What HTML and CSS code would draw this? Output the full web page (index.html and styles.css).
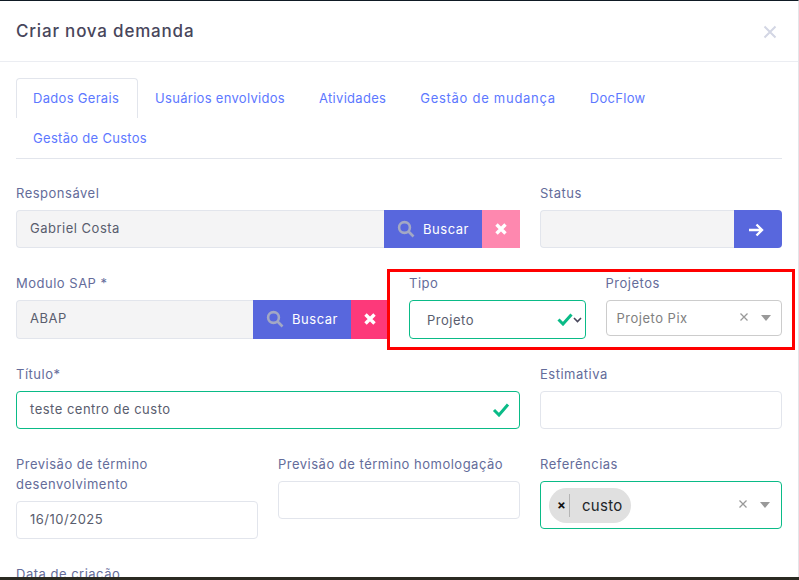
FILE: index.html
```html
<!DOCTYPE html>
<html lang="pt-BR">
<head>
<meta charset="utf-8">
<title>Criar nova demanda</title>
<link rel="stylesheet" href="styles.css">
</head>
<body>
<div class="modal">
  <header class="modal-header">
    <h1 class="modal-title">Criar nova demanda</h1>
    <svg class="close" width="14" height="14" viewBox="0 0 14 14"><path d="M1.500 1.500l11 11M12.500 1.500l-11 11"/></svg>
  </header>
  <div class="modal-body">
    <ul class="tabs">
      <li class="tab active">Dados Gerais</li>
      <li class="tab">Usuários envolvidos</li>
      <li class="tab">Atividades</li>
      <li class="tab tab-wide">Gestão de mudança</li>
      <li class="tab">DocFlow</li>
      <li class="tab">Gestão de Custos</li>
    </ul>
    <div class="grid">
      <div class="field s8">
        <label class="label">Responsável</label>
        <div class="group">
          <div class="control disabled joined">Gabriel Costa</div>
          <div class="btn search"><svg class="mag" width="18" height="18" viewBox="0 0 18 18"><circle cx="7.500" cy="7.500" r="5.400"/><path d="M11.500 11.500l5 5"/></svg>Buscar</div>
          <div class="btn clear faded"><svg class="x" width="12" height="12" viewBox="0 0 12 12"><path d="M1.500 1.500l9 9M10.500 1.500l-9 9"/></svg></div>
        </div>
      </div>
      <div class="field s4">
        <label class="label">Status</label>
        <div class="group">
          <div class="control disabled joined"></div>
          <div class="btn go"><svg class="arrow" width="16" height="14" viewBox="0 0 16 14"><path d="M1 7h13M8.500 1.500L14 7l-5.500 5.500"/></svg></div>
        </div>
      </div>
      <div class="field s6">
        <label class="label">Modulo SAP *</label>
        <div class="group">
          <div class="control disabled joined">ABAP</div>
          <div class="btn search"><svg class="mag" width="18" height="18" viewBox="0 0 18 18"><circle cx="7.500" cy="7.500" r="5.400"/><path d="M11.500 11.500l5 5"/></svg>Buscar</div>
          <div class="btn clear"><svg class="x" width="12" height="12" viewBox="0 0 12 12"><path d="M1.500 1.500l9 9M10.500 1.500l-9 9"/></svg></div>
        </div>
      </div>
      <div class="field s3">
        <label class="label">Tipo</label>
        <div class="control valid select-native">Projeto
          <svg class="check small" width="16" height="14" viewBox="0 0 16 14"><path d="M1.500 7.500l4.500 4.500 8.500-9.500"/></svg>
          <svg class="chev" width="9" height="6" viewBox="0 0 9 6"><path d="M1 1l3.500 3.500L8 1"/></svg>
        </div>
      </div>
      <div class="field s3">
        <label class="label">Projetos</label>
        <div class="rselect">
          <span class="rselect-value">Projeto Pix</span>
          <svg class="rx" width="10" height="10" viewBox="0 0 10 10"><path d="M1.500 1.500l7 7M8.500 1.500l-7 7"/></svg>
          <span class="caret"></span>
        </div>
      </div>
      <div class="field s8">
        <label class="label">Título*</label>
        <div class="control valid">teste centro de custo
          <svg class="check" width="18" height="15" viewBox="0 0 18 15"><path d="M2 8l5 5L16 2.500"/></svg>
        </div>
      </div>
      <div class="field s4">
        <label class="label">Estimativa</label>
        <div class="control"></div>
      </div>
      <div class="field s4">
        <label class="label">Previsão de término desenvolvimento</label>
        <div class="control">16/10/2025</div>
      </div>
      <div class="field s4">
        <label class="label">Previsão de término homologação</label>
        <div class="control"></div>
      </div>
      <div class="field s4">
        <label class="label">Referências</label>
        <div class="rselect multi">
          <span class="chip"><span class="chip-x">×</span><span class="chip-text">custo</span></span>
          <svg class="rx" width="10" height="10" viewBox="0 0 10 10"><path d="M1.500 1.500l7 7M8.500 1.500l-7 7"/></svg>
          <span class="caret"></span>
        </div>
      </div>
      <div class="field s4">
        <label class="label">Data de criação</label>
      </div>
    </div>
  </div>
  <div class="highlight"></div>
</div>
</body>
</html>
```
FILE: styles.css
```css
* { box-sizing: border-box; }
html, body { margin: 0; height: 100%; overflow: hidden; }
body {
  background: #2b2a22;
  font-family: Inter, "Open Sans", sans-serif;
  font-size: 13px;
  letter-spacing: 0.5px;
  color: #595d6e;
  padding-bottom: 3px;
}
.modal {
  position: relative;
  height: 100%;
  background: #fff;
  border-top: 1px solid #0f1a24;
  border-right: 1px solid #e4e4e8;
  overflow: hidden;
}
.modal-header {
  height: 61px;
  padding: 0 21px 0 16px;
  border-bottom: 1px solid #ebedf2;
  display: flex;
  align-items: center;
  justify-content: space-between;
}
.modal-title {
  margin: 0;
  font-size: 17px;
  font-weight: 500;
  letter-spacing: 0.8px;
  color: #48465b;
}
.close { fill: none; stroke: #d3d6e4; stroke-width: 2; margin-top: 2px; }
.modal-body { padding: 16px 16px 0; }
.tabs {
  list-style: none;
  margin: 0 0 24px;
  padding: 0;
  display: flex;
  flex-wrap: wrap;
  border-bottom: 1px solid #e2e5ec;
}
.tab {
  height: 40px;
  padding: 0 17px;
  line-height: 40px;
  letter-spacing: 0.3px;
  color: #5d78ff;
  white-space: nowrap;
}
.tab-wide { letter-spacing: 0.72px; }
.tab.active {
  border: 1px solid #e2e5ec;
  border-bottom: 0;
  border-radius: 4px 4px 0 0;
  padding: 0 18px 0 16px;
  line-height: 38px;
}
.grid {
  display: grid;
  grid-template-columns: repeat(12, 1fr);
  column-gap: 20px;
  align-items: start;
}
.s3 { grid-column: span 3; }
.s4 { grid-column: span 4; }
.s6 { grid-column: span 6; }
.s8 { grid-column: span 8; }
.field { margin-bottom: 25px; }
.label {
  display: block;
  margin-bottom: 7px;
  line-height: 20px;
  color: #646c9a;
}
.group { display: flex; }
.control {
  position: relative;
  height: 38.25px;
  line-height: 35px;
  padding: 0 13px;
  background: #fff;
  border: 1px solid #e2e5ec;
  border-radius: 4px;
}
.group .control { flex: 1; min-width: 0; }
.control.disabled { background: #f4f4f5; }
.control.joined { border-radius: 4px 0 0 4px; border-right: 0; }
.control.valid { border-color: #0abb87; }
.select-native { padding-left: 17px; line-height: 39px; }
.btn {
  height: 38.25px;
  flex: none;
  display: flex;
  align-items: center;
  justify-content: center;
  color: #fff;
  background: #5867dd;
}
.search { width: 98px; gap: 8px; }
.clear { width: 38px; background: #fd397a; }
.clear.faded { background: #fe88af; }
.go { width: 48px; padding-right: 5px; border-radius: 0 4px 4px 0; }
.mag { fill: none; stroke: #a3a8c4; stroke-width: 2.6; }
.x { fill: none; stroke: #fff; stroke-width: 3.4; }
.arrow { fill: none; stroke: #fff; stroke-width: 2.4; margin-top: 1px; }
.check {
  position: absolute;
  right: 9px;
  top: 10px;
  fill: none;
  stroke: #0abb87;
  stroke-width: 3;
}
.check.small { right: 12px; top: 11px; }
.chev {
  position: absolute;
  right: 3px;
  top: 16px;
  fill: none;
  stroke: #48465b;
  stroke-width: 1.6;
}
.rselect {
  display: flex;
  align-items: center;
  height: 36px;
  padding: 0 10px;
  border: 1px solid #ccc;
  border-radius: 4px;
  color: #808080;
}
.rselect-value { flex: 1; }
.rx { fill: none; stroke: #999; stroke-width: 1.3; margin: -3px 12px 0 0; }
.caret {
  width: 0;
  height: 0;
  border: 5px solid transparent;
  border-top: 6px solid #999;
  border-bottom: 0;
}
.rselect.multi {
  height: 48.5px;
  padding: 0 11px 0 8px;
  border: 1.5px solid #0abb87;
}
.chip {
  display: flex;
  align-items: center;
  height: 35px;
  margin-right: auto;
  padding: 0 8px;
  background: #e0e0e0;
  border-radius: 18px;
  color: #212529;
}
.chip-x {
  width: 13px;
  height: 23px;
  margin-right: 12px;
  border-right: 1px solid #b5b5b5;
  color: #111;
  font-size: 13px;
  font-weight: 700;
  line-height: 23px;
  letter-spacing: 0;
}
.chip-text { font-size: 15px; letter-spacing: 0.3px; }
.highlight {
  position: absolute;
  left: 387px;
  top: 268px;
  width: 408px;
  height: 81px;
  border: 3px solid #f00;
  pointer-events: none;
}
```
